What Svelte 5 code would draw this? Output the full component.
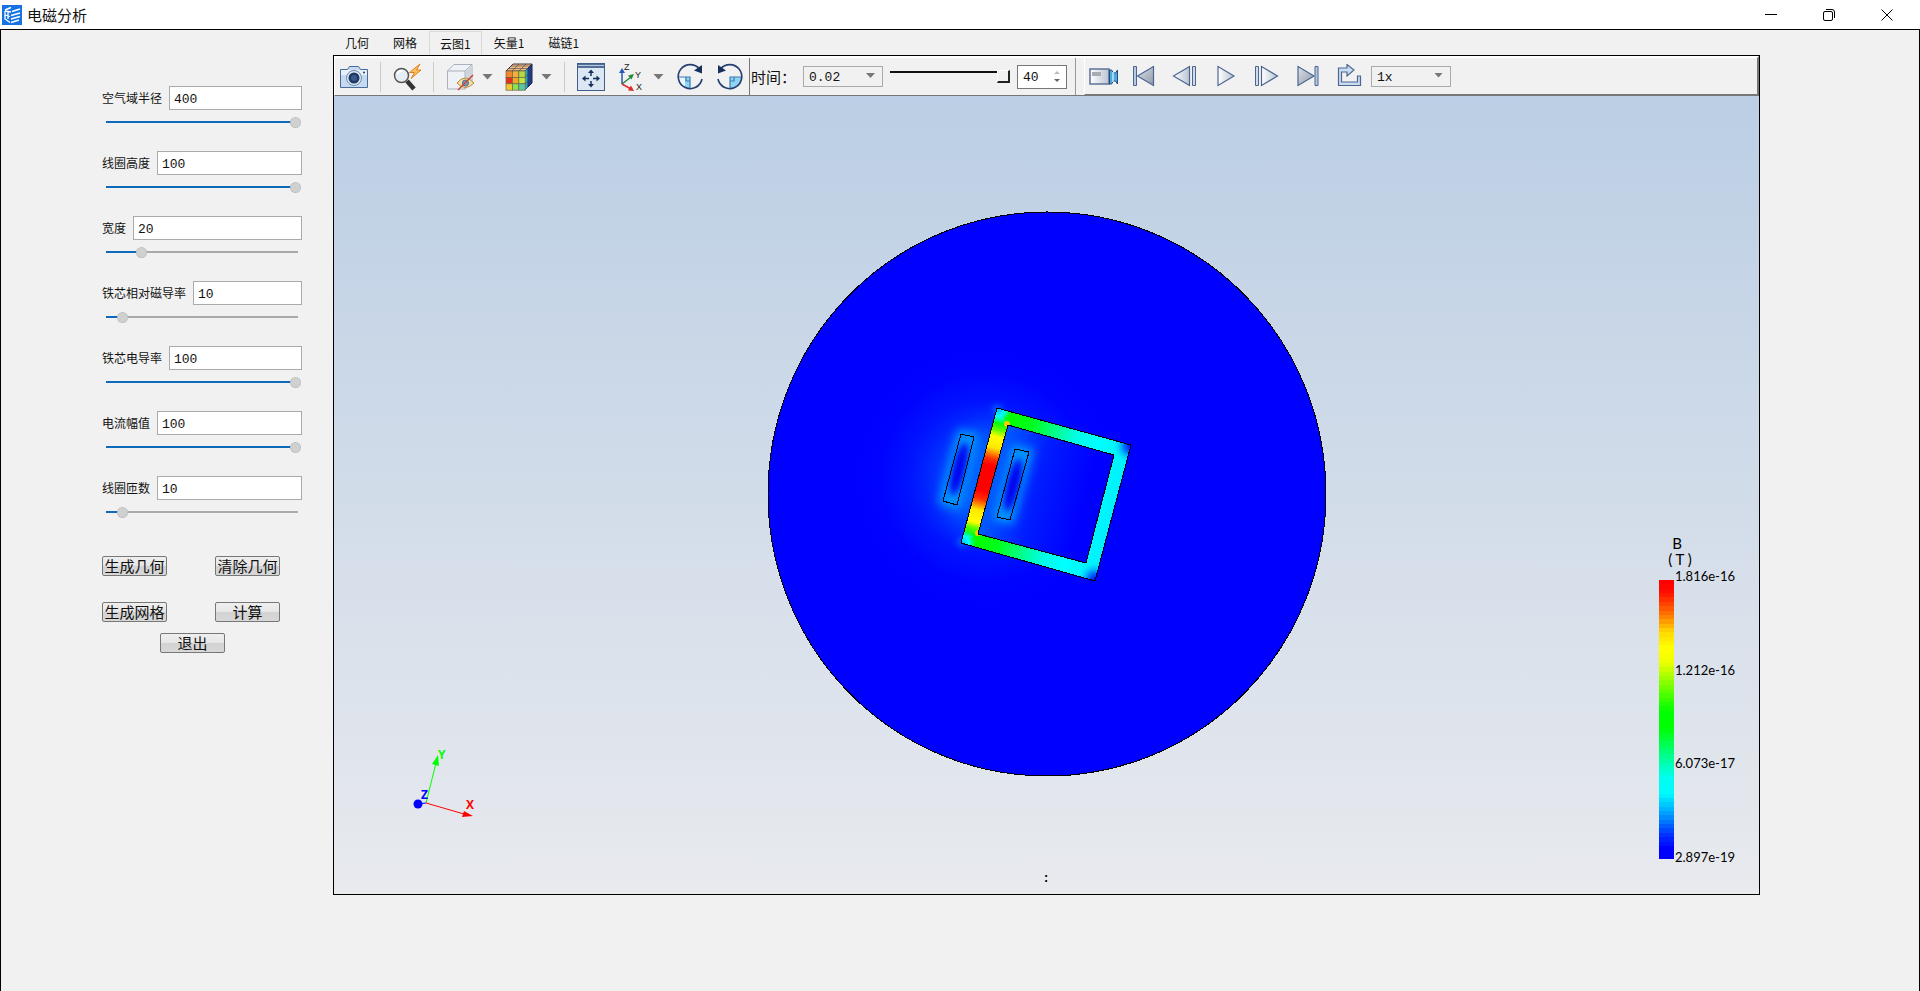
<script lang="ts">
  type Field = { id: string; label: string; value: number; max: number };

  let fields: Field[] = $state([
    { id: 'radius', label: '空气域半径', value: 400, max: 400 },
    { id: 'coil-height', label: '线圈高度', value: 100, max: 100 },
    { id: 'width', label: '宽度', value: 20, max: 100 },
    { id: 'permeability', label: '铁芯相对磁导率', value: 10, max: 100 },
    { id: 'conductivity', label: '铁芯电导率', value: 100, max: 100 },
    { id: 'current', label: '电流幅值', value: 100, max: 100 },
    { id: 'turns', label: '线圈匝数', value: 10, max: 100 }
  ]);

  const tabs = ['几何', '网格', '云图1', '矢量1', '磁链1'];
  let activeTab = $state('云图1');
  let time = $state('0.02');
  let frame = $state(40);
  let speed = $state('1x');

  const fill = (f: Field) => ((f.value - 1) / (f.max - 1)) * 100;

  // colour map, from the highest value down to the lowest
  const stops: [number, number[]][] = [
    [0, [255, 0, 0]],
    [0.04, [255, 16, 0]],
    [0.12, [255, 120, 0]],
    [0.18, [255, 215, 0]],
    [0.24, [255, 255, 0]],
    [0.29, [240, 255, 0]],
    [0.37, [130, 255, 0]],
    [0.47, [0, 255, 0]],
    [0.53, [0, 255, 0]],
    [0.64, [0, 255, 150]],
    [0.71, [0, 255, 240]],
    [0.77, [0, 250, 255]],
    [0.85, [0, 150, 255]],
    [0.92, [0, 50, 255]],
    [0.97, [0, 0, 255]],
    [1, [0, 0, 255]]
  ];

  function mapColor(t: number) {
    let i = 1;
    while (i < stops.length - 1 && t > stops[i][0]) i++;
    const [t0, a] = stops[i - 1];
    const [t1, b] = stops[i];
    const k = (t - t0) / (t1 - t0);
    return `rgb(${a.map((c, n) => Math.round(c + (b[n] - c) * k)).join(',')})`;
  }

  const BANDS = 64;
  const bands = Array.from({ length: BANDS }, (_, i) => ({
    y: 580 + Math.round((i * 279) / BANDS),
    color: mapColor(i / (BANDS - 1))
  }));

  const legend = [
    { y: 581, text: '1.816e-16' },
    { y: 675, text: '1.212e-16' },
    { y: 768, text: '6.073e-17' },
    { y: 862, text: '2.897e-19' }
  ];

  const coils = [
    { points: '961,434 974,437 957,505 943,501', cx: 959, cy: 469 },
    { points: '1015,449 1029,452 1010,520 997,517', cx: 1013, cy: 485 }
  ];

  // front face of the result cube, 3 x 3 cells
  const cubeColors = ['#f4872b', '#f6b03a', '#b8d843', '#e5301c', '#f7a324', '#c6e53b', '#f0c92f', '#8fe04d', '#59c8a0'];
</script>

<div class="window">
  <header class="titlebar">
    <svg class="logo" viewBox="0 0 20 20">
      <rect width="20" height="20" fill="#1673e6" />
      <g fill="none" stroke="#fff" stroke-width="1.6">
        <path d="M3 5 9 2.500M10 6.500l8-2.500M9 10.500l9-2.500M9 14l9-2.500M9 17.500l8-2.500" />
        <path d="M3 6v8l5 3.500M3 10l5 1.500M6 6v8M3 6l6 1" stroke-width="1.3" />
      </g>
    </svg>
    <h1>电磁分析</h1>
    <div class="window-controls">
      <button aria-label="最小化"><svg viewBox="0 0 12 12"><path d="M0 5.5h12" /></svg></button>
      <button aria-label="还原">
        <svg viewBox="0 0 12 12"><rect x=".5" y="2.5" width="9" height="9" rx="1.5" /><path d="M3 .5h6a2.5 2.5 0 0 1 2.5 2.5v6" /></svg>
      </button>
      <button aria-label="关闭"><svg viewBox="0 0 12 12"><path d="M.5.5l11 11M11.5.5l-11 11" /></svg></button>
    </div>
  </header>

  <main>
    <aside class="sidebar">
      {#each fields as field (field.id)}
        <div class="field">
          <div class="field-row">
            <label for={field.id}>{field.label}</label>
            <input id={field.id} class="value" type="text" bind:value={field.value} />
          </div>
          <input
            class="slider"
            type="range"
            min="1"
            max={field.max}
            aria-label={field.label}
            bind:value={field.value}
            style="--fill: {fill(field)}%"
          />
        </div>
      {/each}

      <div class="actions">
        <button>生成几何</button>
        <button>清除几何</button>
        <button>生成网格</button>
        <button>计算</button>
      </div>
      <div class="exit">
        <button>退出</button>
      </div>
    </aside>

    <section class="workspace">
      <div class="tabs" role="tablist">
        {#each tabs as tab}
          <button role="tab" aria-selected={tab === activeTab} class:active={tab === activeTab} onclick={() => (activeTab = tab)}>{tab}</button>
        {/each}
      </div>

      <div class="viewer">
        <div class="toolbar">
          <div class="group tools">
            <button class="icon" aria-label="截图">
              <svg viewBox="0 0 28 28">
                <path d="M.5 6.500h7l2-3h9l2 3h7v18H.5z" fill="#c5daf0" stroke="#486b99" />
                <path d="M1 7h26v5H1z" fill="#e8f1fa" />
                <circle cx="14" cy="15" r="7.5" fill="#dce9f5" stroke="#6d8cb3" />
                <circle cx="14" cy="15" r="5.5" fill="#1f3864" />
                <circle cx="14" cy="15" r="3" fill="#38598c" />
                <circle cx="24" cy="9.5" r="1" fill="#1f3864" />
              </svg>
            </button>
            <span class="sep"></span>
            <button class="icon" aria-label="快速缩放">
              <svg viewBox="0 0 28 28">
                <path d="M14 18l7 8" stroke="#333" stroke-width="4.5" />
                <circle cx="8.5" cy="12.5" r="7" fill="#e6eef5" stroke="#555" stroke-width="1.5" />
                <path d="M4.500 11a4.500 4.500 0 0 1 5-3" fill="none" stroke="#fff" stroke-width="2" />
                <path d="M27 1 16.500 9.500h5L18 15.500 28 7h-4.500z" fill="#fbc15e" stroke="#e0801c" />
              </svg>
            </button>
            <span class="sep"></span>
            <button class="icon menu" aria-label="显示隐藏">
              <svg viewBox="0 0 28 28">
                <path d="M1.500 8 8 1.500h18v18L19 26H1.500z" fill="#eef1f5" stroke="#a9b1bd" />
                <path d="M19.500 8.500 25.500 3v16l-6 6z" fill="#cfd5de" />
                <path d="M1.500 8h17.500V26M19 8l7-6.500" fill="none" stroke="#a9b1bd" />
                <path d="M11 20q8-10 17 0-9 9-17 0z" fill="#f7dfa4" stroke="#b28a3e" />
                <circle cx="19.5" cy="20" r="3" fill="#7d9cc2" stroke="#4a6690" />
                <path d="M12 27 27 12" stroke="#c8452c" stroke-width="1.5" />
              </svg>
              <span class="caret"></span>
            </button>
            <button class="icon menu" aria-label="云图样式">
              <svg viewBox="0 0 28 28">
                <path d="M1 8 8 1h19l-7 7z" fill="#f3bd83" stroke="#3d3d48" />
                <path d="M20 8l7-7v19l-7 7z" fill="#1c3d9b" stroke="#1d2344" />
                <path d="M20 8l3-3v19l-3 3z" fill="#2aa7cb" />
                {#each cubeColors as color, i}
                  <rect x={1 + (i % 3) * 6.4} y={8 + Math.floor(i / 3) * 6.4} width="6.4" height="6.4" fill={color} stroke="#6a664a" stroke-width=".7" />
                {/each}
                <path d="M3.500 5.500h19M6 3h19M7 8l7-7M14 8l7-7M22.500 5.500v19M25 3v19M20 14.500l7-7M20 21l7-7" fill="none" stroke="#3d3d48" stroke-width=".6" />
              </svg>
              <span class="caret"></span>
            </button>
            <span class="sep"></span>
            <button class="icon" aria-label="适应窗口">
              <svg viewBox="0 0 28 28">
                <rect x=".5" y=".5" width="27" height="27" fill="#dce7f4" stroke="#405d8c" />
                <path d="M1 1h26v4H1z" fill="#526d98" />
                <path d="M1 2.500h26" stroke="#b5c8e1" />
                <path d="M14 9v4M14 18v4M8 15.500h4M16 15.500h4" stroke="#17305e" stroke-width="1.5" />
                <path d="M14 6.500l-3 3.500h6zM14 24.500l-3-3.500h6zM5 15.500l3.500-3v6zM23 15.500l-3.500-3v6z" fill="#17305e" />
              </svg>
            </button>
            <button class="icon menu" aria-label="视图方向">
              <svg viewBox="0 0 28 28">
                <path d="M5 21V9" stroke="#2459b5" stroke-width="1.5" />
                <path d="M5 5 2 10h6z" fill="#2459b5" />
                <path d="M5 21l9-7" stroke="#228b3b" stroke-width="1.5" />
                <path d="M17 11l-6 1.500 3.500 4z" fill="#228b3b" />
                <path d="M5 21l9 5" stroke="#e02b2b" stroke-width="1.5" />
                <path d="M17 28l-6-.5 3-5z" fill="#e02b2b" />
                <g class="axis-icon-text">
                  <text x="7" y="7">Z</text>
                  <text x="18" y="15">Y</text>
                  <text x="19" y="27">X</text>
                </g>
              </svg>
              <span class="caret"></span>
            </button>
            <button class="icon" aria-label="顺时针旋转">
              <svg viewBox="0 0 28 28">
                <path d="M2 14h12v12Q3 24 2 14z" fill="#eaf5fb" />
                <path d="M9 14h5v12l-5-2z" fill="#8fd5f3" />
                <path d="M2 14h12v12M10 14v4h4" fill="none" stroke="#3a7db3" stroke-width="1.2" />
                <path d="M23.500 6A12 12 0 1 0 26 16" fill="none" stroke="#263f70" stroke-width="1.6" />
                <path d="M26 2v8.500l-8-3z" fill="#17305e" />
              </svg>
            </button>
            <button class="icon" aria-label="逆时针旋转">
              <svg viewBox="0 0 28 28">
                <path d="M14 14h12q-1 10-12 12z" fill="#8fd5f3" />
                <path d="M26 14H14v12M18 14v4h-4" fill="none" stroke="#3a7db3" stroke-width="1.2" />
                <path d="M4.500 6A12 12 0 1 1 2 16" fill="none" stroke="#263f70" stroke-width="1.6" />
                <path d="M2 2v8.500l8-3z" fill="#17305e" />
              </svg>
            </button>
          </div>

          <div class="group timing">
            <label for="time">时间：</label>
            <span class="select">
              <select id="time" bind:value={time}>
                <option>0.02</option>
              </select>
            </span>
            <input class="frame-slider" type="range" min="0" max="40" aria-label="帧" bind:value={frame} />
            <span class="spin">
              <input type="text" inputmode="numeric" aria-label="帧序号" bind:value={frame} />
              <span class="steps">
                <button class="up" aria-label="增加" disabled={frame >= 40} onclick={() => frame++}></button>
                <button class="down" aria-label="减少" onclick={() => frame--}></button>
              </span>
            </span>
          </div>

          <div class="group playback">
            <button aria-label="录制">
              <svg viewBox="0 0 30 24">
                <defs>
                  <linearGradient id="steel" x1="0" x2="1"><stop offset="0" stop-color="#fff" /><stop offset="1" stop-color="#b9c4d2" /></linearGradient>
                  <linearGradient id="steel-dark" x1="0" x2="1" y2="1"><stop offset="0" stop-color="#dde1e7" /><stop offset="1" stop-color="#8f9aa9" /></linearGradient>
                </defs>
                <rect x="1" y="5" width="19" height="15" fill="url(#steel)" stroke="#5d7396" stroke-width="1.5" />
                <rect x="3" y="8" width="9" height="4" fill="#a6acb4" />
                <path d="M20.500 6h2l2 3h2l2-3v14l-2-3h-2l-2 3h-2z" fill="#4eaadd" stroke="#234a7e" />
                <path d="M24 8v10" stroke="#bfe6fa" stroke-width="1.5" />
              </svg>
            </button>
            <button aria-label="第一帧">
              <svg viewBox="0 0 30 24"><path d="M4.500 2.500h3v19h-3z" fill="#b7c9de" stroke="#4c6692" /><path d="M24.500 2.500v19L8.500 12z" fill="url(#steel-dark)" stroke="#4c6692" stroke-width="1.2" /></svg>
            </button>
            <button aria-label="上一帧">
              <svg viewBox="0 0 30 24"><path d="M22.500 2.500h3v19h-3z" fill="#cfdcea" stroke="#4c6692" /><path d="M19.500 2.500v19L3.500 12z" fill="url(#steel)" stroke="#4c6692" stroke-width="1.2" /></svg>
            </button>
            <button aria-label="播放">
              <svg viewBox="0 0 30 24"><path d="M7 2.500v19L23 12z" fill="url(#steel)" stroke="#4c6692" stroke-width="1.2" /></svg>
            </button>
            <button aria-label="下一帧">
              <svg viewBox="0 0 30 24"><path d="M3.500 2.500h3v19h-3z" fill="#cfdcea" stroke="#4c6692" /><path d="M9.500 2.500v19l16-9.500z" fill="url(#steel)" stroke="#4c6692" stroke-width="1.2" /></svg>
            </button>
            <button aria-label="最后一帧">
              <svg viewBox="0 0 30 24"><path d="M22 2.500h3v19h-3z" fill="#b7c9de" stroke="#4c6692" /><path d="M5 2.500v19L21 12z" fill="url(#steel-dark)" stroke="#4c6692" stroke-width="1.2" /></svg>
            </button>
            <button aria-label="循环">
              <svg viewBox="0 0 30 24"><path d="M13 4H4.500v17.500h22V12h-3v6h-16V8H13v4l7-6-7-5.500z" fill="#c9dcf0" stroke="#4c6692" stroke-width="1.2" /></svg>
            </button>
            <span class="select speed">
              <select aria-label="播放速度" bind:value={speed}>
                <option>1x</option>
              </select>
            </span>
          </div>
        </div>

        <svg class="scene" viewBox="334 96 1425 798">
          <defs>
            <radialGradient id="far" gradientUnits="userSpaceOnUse" cx="985" cy="478" r="130">
              <stop offset="0" stop-color="#0050ff" />
              <stop offset=".35" stop-color="#0030ff" />
              <stop offset=".6" stop-color="#0012ff" />
              <stop offset=".8" stop-color="#0004ff" />
              <stop offset="1" stop-color="#0000ff" />
            </radialGradient>
            <linearGradient id="inner-fade" gradientUnits="userSpaceOnUse" x1="990" y1="475" x2="1085" y2="500">
              <stop offset="0" stop-color="#0060ff" />
              <stop offset=".5" stop-color="#001cff" />
              <stop offset="1" stop-color="#0000ff" />
            </linearGradient>
            <linearGradient id="left-bar" gradientUnits="userSpaceOnUse" x1="997" y1="408" x2="961" y2="543">
              <stop offset="0" stop-color="#00d0ff" />
              <stop offset=".05" stop-color="#00ffd0" />
              <stop offset=".1" stop-color="#00ff10" />
              <stop offset=".15" stop-color="#60ff00" />
              <stop offset=".2" stop-color="#ffff00" />
              <stop offset=".28" stop-color="#ffe800" />
              <stop offset=".36" stop-color="#ff3000" />
              <stop offset=".41" stop-color="#ff0000" />
              <stop offset=".6" stop-color="#ff0000" />
              <stop offset=".66" stop-color="#ff3000" />
              <stop offset=".74" stop-color="#ffe800" />
              <stop offset=".83" stop-color="#ffff00" />
              <stop offset=".87" stop-color="#60ff00" />
              <stop offset=".92" stop-color="#00ff10" />
              <stop offset=".96" stop-color="#00ffd0" />
              <stop offset="1" stop-color="#00d0ff" />
            </linearGradient>
            <linearGradient id="cross-bar" gradientUnits="userSpaceOnUse" x1="980" y1="475" x2="1114" y2="512">
              <stop offset=".1" stop-color="#00ff00" />
              <stop offset=".27" stop-color="#00ff20" />
              <stop offset=".42" stop-color="#00ff80" />
              <stop offset=".6" stop-color="#00ffe8" />
              <stop offset=".75" stop-color="#00ffff" />
              <stop offset="1" stop-color="#00f0ff" />
            </linearGradient>
            <radialGradient id="corner">
              <stop offset="0" stop-color="#0000ff" />
              <stop offset=".4" stop-color="#0068ff" stop-opacity=".9" />
              <stop offset="1" stop-color="#00e8ff" stop-opacity="0" />
            </radialGradient>
            <radialGradient id="cool">
              <stop offset="0" stop-color="#00b8ff" />
              <stop offset=".5" stop-color="#00ffff" />
              <stop offset="1" stop-color="#00ffa0" stop-opacity="0" />
            </radialGradient>
            <clipPath id="core-clip">
              <path clip-rule="evenodd" d="M997 408l134 37-36 136-134-38zM1008 425l-30 109 108 29 28-108z" />
            </clipPath>
            <filter id="blur-wide" x="-100%" y="-100%" width="300%" height="300%"><feGaussianBlur stdDeviation="13" /></filter>
            <filter id="blur-mid" x="-100%" y="-100%" width="300%" height="300%"><feGaussianBlur stdDeviation="5" /></filter>
            <filter id="blur-small" x="-100%" y="-100%" width="300%" height="300%"><feGaussianBlur stdDeviation="3" /></filter>
          </defs>

          <!-- air domain -->
          <ellipse cx="1047" cy="494" rx="279" ry="282" fill="#0000ff" />
          <circle cx="985" cy="478" r="130" fill="url(#far)" />
          <ellipse cx="980" cy="476" rx="30" ry="50" fill="#0060ff" transform="rotate(15 980 476)" filter="url(#blur-wide)" />
          <path d="M1008 425l-30 109 108 29 28-108z" fill="url(#inner-fade)" />
          <ellipse class="edge" cx="1047" cy="494" rx="279" ry="282" />

          <!-- coils -->
          {#each coils as coil}
            <polygon points={coil.points} fill="#0098ff" stroke="#0098ff" stroke-width="8" filter="url(#blur-mid)" />
            <ellipse cx={coil.cx} cy={coil.cy} rx="5" ry="28" fill="#0000f0" transform="rotate(14 {coil.cx} {coil.cy})" filter="url(#blur-small)" />
            <ellipse cx={coil.cx} cy={coil.cy} rx="3" ry="22" fill="#0000f0" transform="rotate(14 {coil.cx} {coil.cy})" filter="url(#blur-small)" />
            <polygon class="edge" points={coil.points} />
          {/each}
          <circle cx="997" cy="409" r="4" fill="#0078ff" filter="url(#blur-small)" />
          <circle cx="962" cy="542" r="4" fill="#0078ff" filter="url(#blur-small)" />

          <!-- iron core -->
          <g clip-path="url(#core-clip)">
            <path d="M997 408l134 37-36 136-134-38z" fill="url(#cross-bar)" />
            <path d="M997 408l11 17-30 109-17 9z" fill="url(#left-bar)" />
            <circle cx="998" cy="409" r="14" fill="url(#cool)" />
            <circle cx="962" cy="543" r="14" fill="url(#cool)" />
            <circle cx="1131" cy="446" r="18" fill="url(#corner)" />
            <circle cx="1095" cy="580" r="18" fill="url(#corner)" />
            <circle cx="1007" cy="424" r="3" fill="#f4d000" />
            <circle cx="978" cy="533" r="3" fill="#f4d000" />
          </g>
          <path class="edge" d="M997 408l134 37-36 136-134-38zM1008 425l-30 109 108 29 28-108z" />

          <!-- axis triad -->
          <g class="triad">
            <path d="M426 803l10-40" stroke="#00ff00" />
            <path d="M438 755l-6 9 7 2z" fill="#00ff00" />
            <path d="M426 803l38 11" stroke="#ff0000" />
            <path d="M473 816l-9-5-2 6z" fill="#ff0000" />
            <path d="M418 804l8-1" stroke="#0000ff" />
            <circle cx="418" cy="804" r="4.5" fill="#0000ff" />
            <text x="438" y="759" fill="#00ff00">Y</text>
            <text x="466" y="809" fill="#ff0000">X</text>
            <text x="421" y="799" fill="#0000ff">Z</text>
          </g>

          <!-- legend -->
          {#each bands as band, i}
            <rect x="1659" y={band.y} width="15" height={(bands[i + 1]?.y ?? 859) - band.y} fill={band.color} />
          {/each}
          <g class="legend-title">
            <text x="1677" y="549">B</text>
            <text x="1680" y="565">( T )</text>
          </g>
          <g class="legend-labels">
            {#each legend as item}
              <text x="1675" y={item.y}>{item.text}</text>
            {/each}
          </g>
          <text class="caption" x="1046" y="882">:</text>
        </svg>
      </div>
    </section>
  </main>
</div>

<style>
  :global(body) {
    background: #f1f1f1;
  }

  .window {
    min-height: 100vh;
    display: flex;
    flex-direction: column;
    box-sizing: border-box;
    background: #f1f1f1;
    color: #111;
    font-family: "Noto Sans CJK SC", sans-serif;
    font-size: 12px;
  }

  button,
  input,
  select {
    box-sizing: border-box;
    margin: 0;
    padding: 0;
    border: none;
    border-radius: 0;
    background: none;
    color: inherit;
    font: inherit;
  }

  .titlebar {
    height: 29px;
    display: flex;
    align-items: center;
    padding: 0 4px 0 2px;
    background: #fff;
    border-bottom: 1px solid #000;
  }

  .logo {
    width: 20px;
    height: 20px;
  }

  h1 {
    margin: 0 auto 0 5px;
    font-size: 15px;
    font-weight: 400;
    line-height: 22px;
  }

  .window-controls {
    display: flex;
  }

  .window-controls button {
    width: 58px;
    height: 28px;
    display: flex;
    align-items: center;
    justify-content: center;
  }

  .window-controls svg {
    width: 12px;
    height: 12px;
    fill: none;
    stroke: #000;
  }

  main {
    flex: 1;
    display: flex;
    align-items: flex-start;
    border: solid #000;
    border-width: 0 1px;
  }

  .sidebar {
    width: 332px;
    flex-shrink: 0;
    box-sizing: border-box;
    padding: 56px 31px 0 99px;
  }

  .field {
    height: 65px;
  }

  .field-row {
    display: flex;
    align-items: center;
    gap: 7px;
    padding-left: 2px;
  }

  .field-row label {
    line-height: 18px;
    white-space: nowrap;
  }

  .value {
    flex: 1;
    min-width: 0;
    height: 24px;
    padding: 2px 3px 0 4px;
    background: #fff;
    border: 1px solid #aaa;
    font-family: "Liberation Mono", monospace;
    font-size: 13px;
  }

  .slider {
    display: block;
    width: 201px;
    height: 14px;
    margin-top: 5px;
    appearance: none;
    background: linear-gradient(to right, #0f69b9 var(--fill), #aaa var(--fill)) 6px center / calc(100% - 9px) 2px no-repeat;
  }

  .slider::-webkit-slider-thumb {
    appearance: none;
    width: 11px;
    height: 11px;
    border-radius: 50%;
    background: #d0d0d0;
    border: 1px dotted #b0b0b0;
    box-sizing: border-box;
  }

  .actions {
    display: grid;
    grid-template-columns: 65px 65px;
    gap: 26px 48px;
    margin: 15px 0 11px;
    padding-left: 2px;
  }

  .exit {
    padding-left: 60px;
  }

  .actions button,
  .exit button {
    width: 65px;
    height: 20px;
    background: linear-gradient(#efefef, #e6e6e6 50%, #d2d2d2 50%, #d8d8d8);
    border: 1px solid #777;
    border-radius: 2px;
    font-size: 15px;
    line-height: 18px;
    white-space: nowrap;
  }

  .workspace {
    flex: 1;
    min-width: 0;
    margin-right: 159px;
  }

  .tabs {
    display: flex;
    height: 25px;
    align-items: flex-end;
  }

  .tabs button {
    height: 24px;
    padding: 0 12px;
    line-height: 24px;
  }

  .tabs .active {
    padding: 0 10px;
    border: solid #d9d9d9;
    border-width: 1px 1px 0;
    line-height: 22px;
  }

  .viewer {
    border: 1px solid #000;
    background: linear-gradient(#b9cde4, #e8eaee);
  }

  .toolbar {
    display: flex;
    height: 40px;
    box-sizing: border-box;
    background: #f1f1f1;
    border: solid #777;
    border-width: 2px 2px 1px 1px;
    border-top-color: #fff;
    border-left-color: #fff;
  }

  .group {
    display: flex;
    align-items: center;
    flex-shrink: 0;
  }

  .tools {
    gap: 12px;
    padding: 0 5px;
    border-right: 1px solid #777;
  }

  .icon {
    height: 28px;
    display: flex;
    align-items: center;
    gap: 8px;
  }

  .icon svg {
    width: 28px;
    height: 28px;
  }

  .caret {
    width: 11px;
    height: 6px;
    background: #777;
    clip-path: polygon(0 0, 100% 0, 50% 100%);
  }

  .sep {
    width: 1px;
    height: 30px;
    background: #ccc;
  }

  .axis-icon-text {
    font: 9px "Liberation Sans", sans-serif;
    fill: #222;
  }

  .timing {
    padding: 0 8px 0 1px;
    border-right: 1px solid #999;
  }

  .timing label {
    width: 52px;
    font-size: 15px;
    line-height: 22px;
    white-space: nowrap;
  }

  .select {
    position: relative;
    display: flex;
  }

  .select::after {
    content: "";
    position: absolute;
    right: 8px;
    top: 7px;
    width: 9px;
    height: 5px;
    background: #777;
    clip-path: polygon(0 0, 100% 0, 50% 100%);
    pointer-events: none;
  }

  select {
    width: 80px;
    height: 21px;
    padding: 2px 0 0 5px;
    appearance: none;
    border: 1px solid #aaa;
    font-family: "Liberation Mono", monospace;
    font-size: 13px;
  }

  .frame-slider {
    width: 120px;
    height: 14px;
    margin: 0 7px;
    appearance: none;
    background: linear-gradient(#111, #111) 0 1px / 100% 2px no-repeat;
  }

  .frame-slider::-webkit-slider-thumb {
    appearance: none;
    width: 13px;
    height: 13px;
    background: #f1f1f1;
    border: solid #222;
    border-width: 1px 2px 2px 1px;
    border-top-color: #fff;
    border-left-color: #fff;
    box-sizing: border-box;
  }

  .spin {
    display: flex;
    width: 50px;
    height: 24px;
    box-sizing: border-box;
    background: #fff;
    border: 1px solid #777;
  }

  .spin input {
    width: 32px;
    padding: 2px 0 0 5px;
    font-family: "Liberation Mono", monospace;
    font-size: 13px;
  }

  .steps {
    display: flex;
    flex-direction: column;
    justify-content: center;
    gap: 5px;
    padding-left: 4px;
  }

  .steps button {
    width: 6px;
    height: 3px;
    background: #666;
  }

  .up {
    clip-path: polygon(50% 0, 100% 100%, 0 100%);
  }

  .steps .up:disabled {
    background: #bbb;
  }

  .down {
    clip-path: polygon(0 0, 100% 0, 50% 100%);
  }

  .playback {
    flex: 1;
    margin-left: 8px;
    border-left: 1px solid #fff;
    border-bottom: 1px solid #777;
  }

  .playback button {
    width: 41px;
    height: 28px;
    display: flex;
    align-items: center;
    justify-content: center;
  }

  .playback button:first-child {
    width: 38px;
  }

  .playback svg {
    width: 30px;
    height: 24px;
  }

  .speed {
    margin-left: 2px;
  }

  .scene {
    display: block;
    width: 100%;
    height: auto;
  }

  .edge {
    fill: none;
    stroke: #000;
    stroke-width: 1;
    shape-rendering: crispEdges;
  }

  .triad {
    fill: none;
    font: 700 12px "Open Sans", sans-serif;
  }

  .legend-title {
    font: 15px Lato, sans-serif;
    text-anchor: middle;
  }

  .legend-labels {
    font: 13px Lato, sans-serif;
  }

  .caption {
    font: bold 12px "Liberation Mono", monospace;
    text-anchor: middle;
  }
</style>
